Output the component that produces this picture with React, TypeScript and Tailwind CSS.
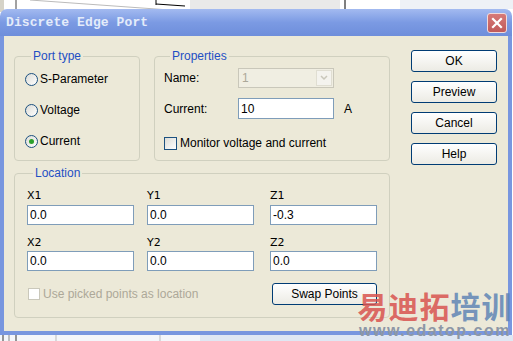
import type { ReactNode } from 'react';

const font = "font-['Liberation_Sans',Arial,sans-serif]";

function XPButton({ children, className = '' }: { children: ReactNode; className?: string }) {
  return (
    <button
      className={`h-[22px] border border-[#003c74] rounded-[3px] bg-gradient-to-b from-white to-[#ecebe4] text-[12px] text-black flex items-center justify-center ${className}`}
    >
      {children}
    </button>
  );
}

function Radio({ label, checked = false }: { label: string; checked?: boolean }) {
  return (
    <div className="flex items-center h-[16px]">
      <span className="w-[13px] h-[13px] rounded-full border border-[#1c5180] bg-gradient-to-br from-[#dcdcd6] to-white flex items-center justify-center">
        {checked && <span className="w-[5px] h-[5px] rounded-full bg-[#2ba02b]" />}
      </span>
      <span className="ml-[2px] text-[12px] text-black">{label}</span>
    </div>
  );
}

function TextBox({ value, className = '' }: { value: string; className?: string }) {
  return (
    <div className={`h-[20px] border border-[#7f9db9] bg-white flex items-center px-[2px] text-[12px] text-black ${className}`}>
      {value}
    </div>
  );
}

function Group({ title, className = '', children }: { title: string; className?: string; children: ReactNode }) {
  return (
    <fieldset className={`border border-[#d0d0bf] rounded-[4px] ${className}`}>
      <legend className="ml-[6px] px-[2px] text-[12px] leading-[14px] text-[#1f4fc4]">{title}</legend>
      {children}
    </fieldset>
  );
}

export default function App() {
  return (
    <div className={`relative w-[513px] h-[341px] bg-white overflow-hidden ${font}`}>
      {/* background drawing behind the dialog */}
      <svg className="absolute inset-0" width="513" height="341">
        <rect x="0" y="0" width="4" height="12" fill="#d6d3c8" />
        <line x1="16" y1="0" x2="16" y2="10" stroke="#444" strokeWidth="1" />
        <line x1="30" y1="0" x2="170" y2="10" stroke="#bbb" strokeWidth="1" />
        <path d="M156 4 L185 6" stroke="#000" strokeWidth="1" fill="none" />
        <line x1="156" y1="0" x2="156" y2="5" stroke="#000" strokeWidth="1" />
        <rect x="190" y="0" width="150" height="9" fill="#e9e9e9" />
        <line x1="345" y1="0" x2="345" y2="9" stroke="#000" strokeWidth="1" />
        <rect x="400" y="0" width="113" height="9" fill="#eef1f6" />
        <rect x="0" y="335" width="513" height="6" fill="#f4f6fa" />
        <line x1="3" y1="335" x2="3" y2="341" stroke="#333" />
        <line x1="9" y1="335" x2="9" y2="341" stroke="#888" />
        <line x1="16" y1="335" x2="16" y2="341" stroke="#333" />
        <line x1="56" y1="335" x2="56" y2="341" stroke="#bbb" />
        <line x1="160" y1="335" x2="160" y2="341" stroke="#bbb" />
        <rect x="200" y="335" width="313" height="6" fill="#dfe7f3" />
      </svg>

      {/* dialog window */}
      <div className="absolute left-0 top-[9px] w-[512px] flex flex-col">
        {/* title bar */}
        <div className="h-[27px] rounded-t-[7px] bg-gradient-to-b from-[#a3baf0] via-[#7b9ae3] to-[#6e8edb] flex items-center justify-between pl-[6px] pr-[5px]">
          <span className="font-['Liberation_Mono',monospace] font-bold text-[13px] text-[#e4ecfa] tracking-[0.1px]">
            Discrete Edge Port
          </span>
          <span className="w-[20px] h-[20px] rounded-[3px] border border-[#f1dada] bg-gradient-to-b from-[#d77a78] to-[#c05a5a] flex items-center justify-center">
            <svg width="12" height="12" viewBox="0 0 12 12">
              <path d="M2 2 L10 10 M10 2 L2 10" stroke="#fff" strokeWidth="2.2" strokeLinecap="square" />
            </svg>
          </span>
        </div>

        {/* body */}
        <div className="h-[299px] border-x-4 border-b-4 border-[#7896df] bg-[#ece9d8] flex pl-[10px] pt-[13px]">
          <div className="w-[376px] flex flex-col">
            <div className="flex gap-[14px]">
              <Group title="Port type" className="w-[126px] h-[112px] pl-[10px]">
                <div className="mt-[8px] flex flex-col gap-[15px]">
                  <Radio label="S-Parameter" />
                  <Radio label="Voltage" />
                  <Radio label="Current" checked />
                </div>
              </Group>

              <Group title="Properties" className="w-[236px] h-[112px] pl-[9px]">
                <div className="mt-[5px] flex items-center h-[20px]">
                  <span className="w-[74px] text-[12px] text-black">Name:</span>
                  <div className="w-[96px] h-[20px] border border-[#c9c7ba] bg-[#f0eee2] flex items-center">
                    <span className="flex-1 pl-[3px] text-[12px] text-[#aca899]">1</span>
                    <span className="w-[16px] h-[16px] mr-[1px] bg-[#f4f3ee] border border-[#e0ded2] flex items-center justify-center">
                      <svg width="8" height="6" viewBox="0 0 8 6">
                        <path d="M1 1 L4 4 L7 1" stroke="#c9c7ba" strokeWidth="1.5" fill="none" />
                      </svg>
                    </span>
                  </div>
                </div>
                <div className="mt-[10px] flex items-center">
                  <span className="w-[74px] text-[12px] text-black">Current:</span>
                  <TextBox value="10" className="w-[96px] h-[21px]" />
                  <span className="ml-[10px] text-[12px] text-black">A</span>
                </div>
                <div className="mt-[15px] flex items-center">
                  <span className="w-[13px] h-[13px] border border-[#1c5180] bg-gradient-to-br from-[#dcdcd6] to-white" />
                  <span className="ml-[3px] text-[12px] text-black">Monitor voltage and current</span>
                </div>
              </Group>
            </div>

            <Group title="Location" className="mt-[5px] w-[376px] h-[152px] pl-[12px]">
              <div className="mt-[9px] grid grid-cols-[120px_123px_107px] text-[12px] text-black">
                <span className="h-[14px] leading-[14px] font-['DejaVu_Sans',sans-serif] text-[11px]">X1</span>
                <span className="h-[14px] leading-[14px] font-['DejaVu_Sans',sans-serif] text-[11px]">Y1</span>
                <span className="h-[14px] leading-[14px] font-['DejaVu_Sans',sans-serif] text-[11px]">Z1</span>
                <TextBox value="0.0" className="mt-[2px] w-[107px]" />
                <TextBox value="0.0" className="mt-[2px] w-[107px]" />
                <TextBox value="-0.3" className="mt-[2px] w-[107px]" />
                <span className="mt-[11px] h-[14px] leading-[14px] font-['DejaVu_Sans',sans-serif] text-[11px]">X2</span>
                <span className="mt-[11px] h-[14px] leading-[14px] font-['DejaVu_Sans',sans-serif] text-[11px]">Y2</span>
                <span className="mt-[11px] h-[14px] leading-[14px] font-['DejaVu_Sans',sans-serif] text-[11px]">Z2</span>
                <TextBox value="0.0" className="mt-[1px] w-[107px]" />
                <TextBox value="0.0" className="mt-[1px] w-[107px]" />
                <TextBox value="0.0" className="mt-[1px] w-[107px]" />
              </div>
              <div className="mt-[12px] flex items-center">
                <div className="w-[245px] flex items-center pl-[1px]">
                  <span className="w-[12px] h-[12px] border border-[#cac8bb] bg-white" />
                  <span className="ml-[3px] text-[12px] text-[#aca899]">Use picked points as location</span>
                </div>
                <XPButton className="w-[105px]">Swap Points</XPButton>
              </div>
            </Group>
          </div>

          <div className="ml-[21px] mt-[1px] w-[86px] flex flex-col gap-[9px]">
            <XPButton className="w-[86px]">OK</XPButton>
            <XPButton className="w-[86px]">Preview</XPButton>
            <XPButton className="w-[86px]">Cancel</XPButton>
            <XPButton className="w-[86px]">Help</XPButton>
          </div>
        </div>
      </div>

      {/* watermark */}
      <div className="absolute left-[357px] top-[290px] w-[156px] flex flex-col items-center pointer-events-none">
        <div className="font-['Noto_Sans_CJK_SC',sans-serif] font-bold text-[30px] leading-[30px] tracking-[1px] whitespace-nowrap">
          <span className="text-[#d9534f]/85">易迪拓</span>
          <span className="text-[#5f85b5]/85">培训</span>
        </div>
        <div className="mt-[3px] font-['Liberation_Sans',Arial,sans-serif] font-bold text-[16px] leading-[15px] tracking-[1.5px] text-[#8d97a6] whitespace-nowrap">
          www.edatop.com
        </div>
      </div>
    </div>
  );
}
